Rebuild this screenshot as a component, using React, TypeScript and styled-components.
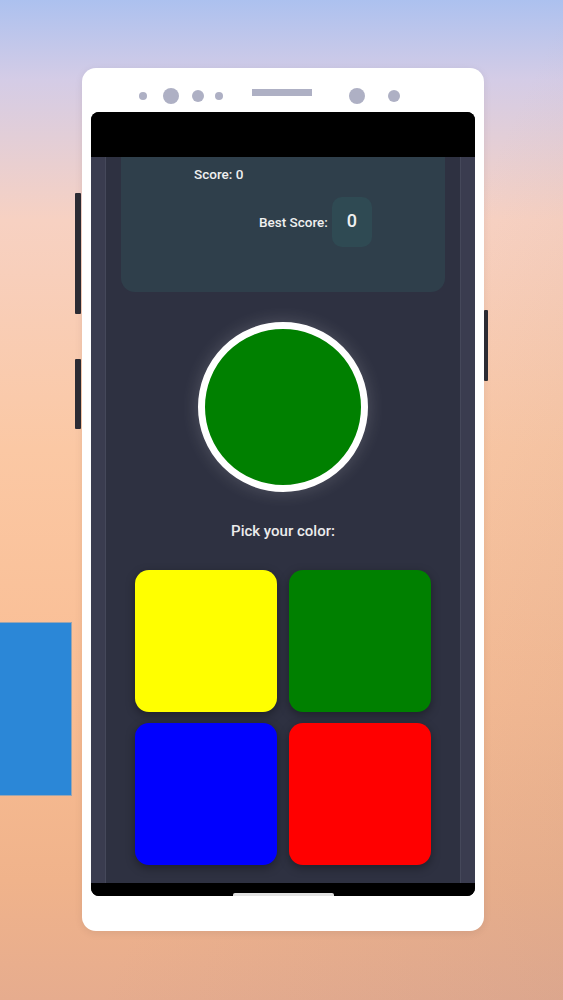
import React from "react";
import styled, { createGlobalStyle } from "styled-components";

const Global = createGlobalStyle`
  html, body { margin: 0; padding: 0; }
  body { font-family: Roboto, "Liberation Sans", Arial, sans-serif; }
  * { box-sizing: border-box; }
`;

const Page = styled.div`
  position: relative;
  width: 563px;
  height: 1000px;
  overflow: hidden;
  padding: 68px 0 0 82px;
  background:
    linear-gradient(115deg, rgba(255, 255, 255, 0) 55%, rgba(190, 150, 140, 0.25) 100%),
    linear-gradient(180deg, #acc1ef 0%, #d4cce6 8%, #f7d1c2 22%, #fbc8a4 45%, #f9bd93 70%, #f0b38b 88%, #e6ac8e 100%);
`;

const SideDecor = styled.div`
  position: absolute;
  left: 0;
  top: 622px;
  width: 72px;
  height: 174px;
  background: #2b87d7;
  border: 1px solid #9aa4b0;
  border-left: none;
`;

const Phone = styled.div`
  position: relative;
  width: 402px;
  height: 863px;
  background: #ffffff;
  border-radius: 14px;
  padding: 0 9px;
  display: flex;
  flex-direction: column;
  box-shadow: 0 2px 8px rgba(0, 0, 0, 0.08);
`;

const SideButton = styled.div<{ $side: "left" | "right"; $top: number; $h: number }>`
  position: absolute;
  ${(p) => (p.$side === "left" ? "left: -7px;" : "right: -4px;")}
  top: ${(p) => p.$top}px;
  width: ${(p) => (p.$side === "left" ? 6 : 4)}px;
  height: ${(p) => p.$h}px;
  background: #2b2b33;
  border-radius: 1px;
`;

const Sensors = styled.div`
  height: 44px;
  display: flex;
  align-items: center;
  padding: 12px 0 0 48px;
`;

const Dot = styled.div<{ $d: number; $ml: number }>`
  width: ${(p) => p.$d}px;
  height: ${(p) => p.$d}px;
  margin-left: ${(p) => p.$ml}px;
  border-radius: 50%;
  background: #aeb0c4;
  flex-shrink: 0;
`;

const Speaker = styled.div`
  width: 60px;
  height: 7px;
  margin-left: 29px;
  margin-bottom: 7px;
  background: #aeb0c4;
  flex-shrink: 0;
`;

const Screen = styled.div`
  width: 384px;
  height: 784px;
  background: #000;
  border-radius: 8px;
  overflow: hidden;
  display: flex;
  flex-direction: column;
`;

const StatusBar = styled.div`
  height: 45px;
  background: #000;
  flex-shrink: 0;
`;

const Content = styled.div`
  flex: 1;
  background: #3a3c4f;
  padding: 0 14px;
  overflow: hidden;
  display: flex;
`;

const Inner = styled.div`
  flex: 1;
  background: #2e3141;
  border-left: 1px solid #45485a;
  border-right: 1px solid #45485a;
  padding: 0 15px;
  display: flex;
  flex-direction: column;
  align-items: center;
`;

const ScoreCard = styled.div`
  align-self: stretch;
  margin-top: -20px;
  height: 155px;
  background: #2f3f4b;
  border-radius: 14px;
  padding: 29px 0 0 73px;
  display: flex;
  flex-direction: column;
  color: #f0f0f0;
  font-weight: 500;
  font-size: 13.5px;
`;

const ScoreText = styled.div`
  line-height: 16px;
`;

const BestRow = styled.div`
  margin: 15px 0 0 65px;
  display: flex;
  align-items: center;
  gap: 4px;
`;

const BestBox = styled.div`
  width: 40px;
  height: 50px;
  border-radius: 10px;
  background: #2f4a53;
  display: flex;
  align-items: center;
  justify-content: center;
  font-size: 18px;
  font-weight: 500;
  padding-bottom: 3px;
`;

const TargetCircle = styled.div<{ $color: string }>`
  margin-top: 30px;
  width: 170px;
  height: 170px;
  border-radius: 50%;
  border: 7px solid #ffffff;
  background: ${(p) => p.$color};
  box-shadow: 0 0 18px rgba(255, 255, 255, 0.18);
  flex-shrink: 0;
`;

const Prompt = styled.div`
  margin-top: 29px;
  color: #ececec;
  font-size: 15px;
  font-weight: 500;
  line-height: 20px;
`;

const Grid = styled.div`
  margin-top: 29px;
  display: grid;
  grid-template-columns: repeat(2, 142px);
  grid-auto-rows: 142px;
  gap: 11px 12px;
`;

const Tile = styled.button<{ $color: string }>`
  border: none;
  padding: 0;
  border-radius: 14px;
  background: ${(p) => p.$color};
  box-shadow: 0 3px 10px rgba(0, 0, 0, 0.35);
  cursor: pointer;
`;

const BottomBar = styled.div`
  height: 13px;
  background: #000;
  flex-shrink: 0;
  display: flex;
  justify-content: center;
  align-items: flex-end;
`;

const HomeIndicator = styled.div`
  width: 101px;
  height: 3px;
  margin-left: 1px;
  background: #e2e2e2;
  border-radius: 2px 2px 0 0;
`;

const colors = ["#ffff00", "#008000", "#0000ff", "#ff0000"];

export default function App() {
  return (
    <>
      <Global />
      <Page>
        <SideDecor />
        <Phone>
          <SideButton $side="left" $top={125} $h={121} />
          <SideButton $side="left" $top={291} $h={70} />
          <SideButton $side="right" $top={242} $h={71} />
          <Sensors>
            <Dot $d={8} $ml={0} />
            <Dot $d={16} $ml={16} />
            <Dot $d={12} $ml={13} />
            <Dot $d={8} $ml={11} />
            <Speaker />
            <Dot $d={16} $ml={37} />
            <Dot $d={12} $ml={23} />
          </Sensors>
          <Screen>
            <StatusBar />
            <Content>
              <Inner>
                <ScoreCard>
                  <ScoreText>Score: 0</ScoreText>
                  <BestRow>
                    <ScoreText>Best Score:</ScoreText>
                    <BestBox>0</BestBox>
                  </BestRow>
                </ScoreCard>
                <TargetCircle $color="#008000" />
                <Prompt>Pick your color:</Prompt>
                <Grid>
                  {colors.map((c) => (
                    <Tile key={c} $color={c} aria-label={c} />
                  ))}
                </Grid>
              </Inner>
            </Content>
            <BottomBar>
              <HomeIndicator />
            </BottomBar>
          </Screen>
        </Phone>
      </Page>
    </>
  );
}
